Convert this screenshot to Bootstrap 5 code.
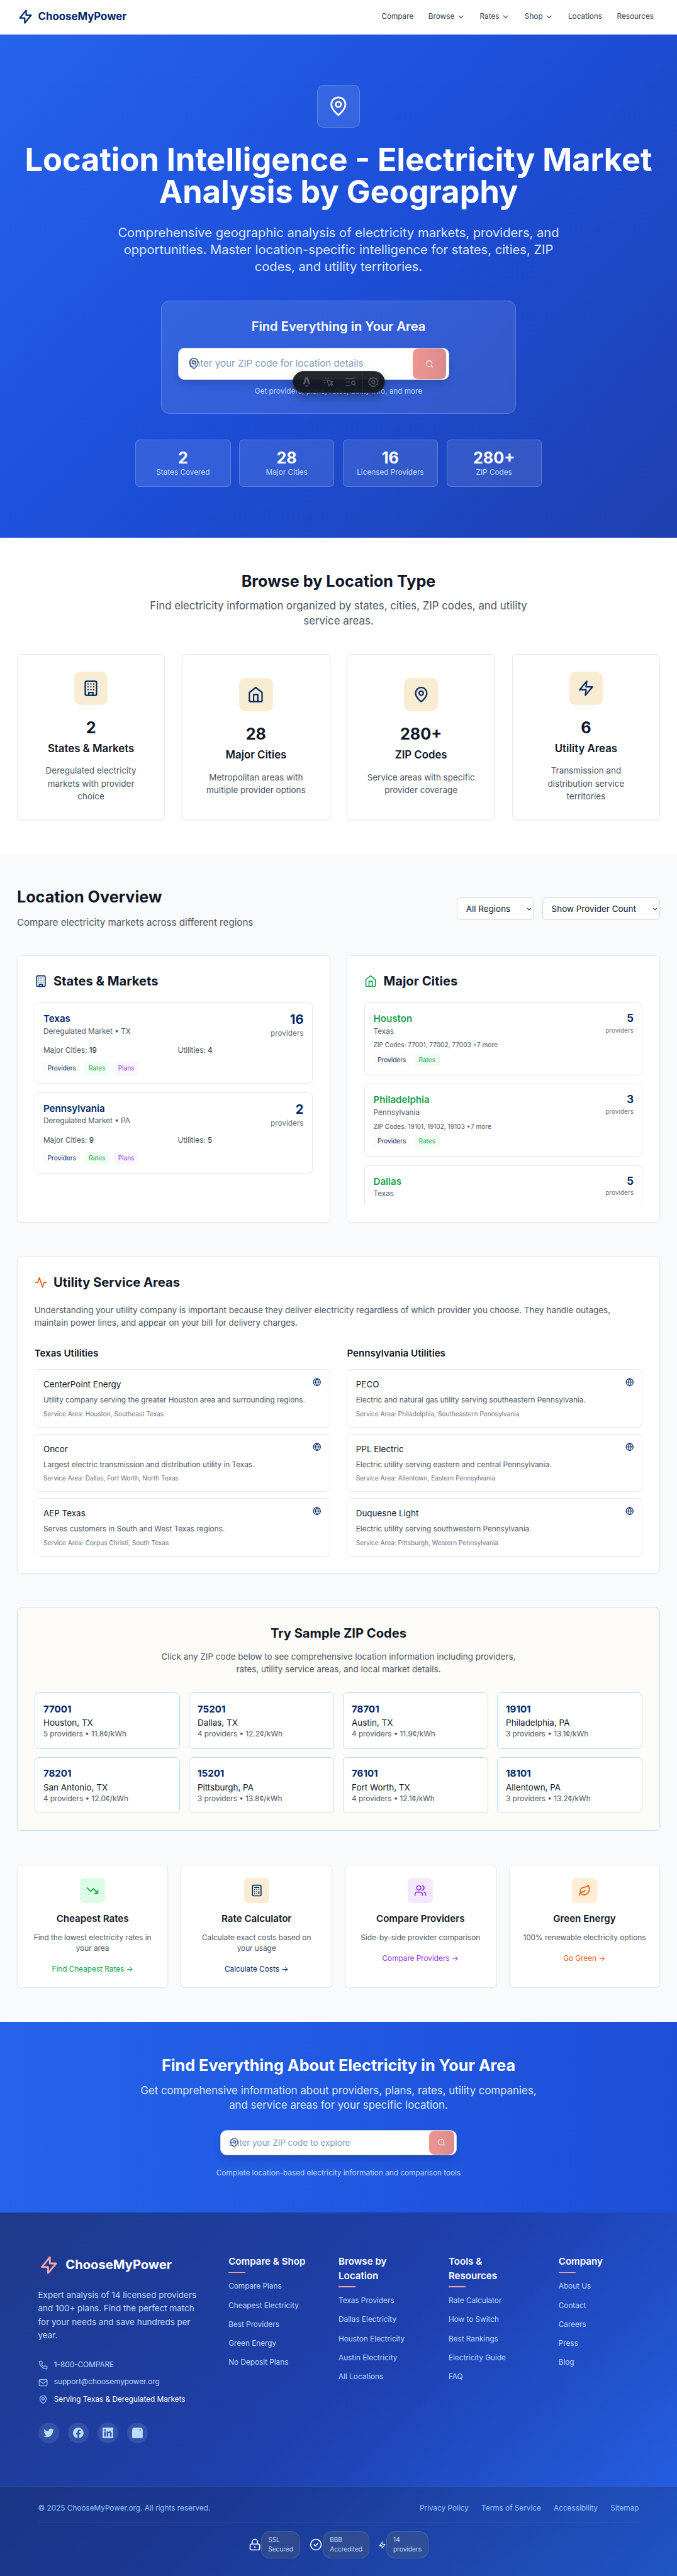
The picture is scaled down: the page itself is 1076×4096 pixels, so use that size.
<!DOCTYPE html>
<html lang="en">
<head>
<meta charset="utf-8">
<meta name="viewport" content="width=device-width, initial-scale=1">
<title>ChooseMyPower - Location Intelligence</title>
<link href="https://cdn.jsdelivr.net/npm/bootstrap@5.3.0/dist/css/bootstrap.min.css" rel="stylesheet">
<style>
html{font-size:13.452px}
body{font-family:Inter,"Liberation Sans",sans-serif;line-height:1.5;color:#111827;background:#fff;min-height:100vh;overflow-x:hidden}
a{text-decoration:none;color:inherit}
h1,h2,h3,h4,p,ul{margin:0;padding:0}
svg{display:block;flex:none}
.ic{fill:none;stroke:currentColor;stroke-width:2;stroke-linecap:round;stroke-linejoin:round}
.s16{width:1rem;height:1rem}.s18{width:1.125rem;height:1.125rem}.s20{width:1.25rem;height:1.25rem}
.s24{width:1.5rem;height:1.5rem}.s32{width:2rem;height:2rem}.s40{width:2.5rem;height:2.5rem}
.t12{font-size:.75rem;line-height:1rem}.t14{font-size:.875rem;line-height:1.25rem}.t16{font-size:1rem;line-height:1.5rem}
.t18{font-size:1.125rem;line-height:1.75rem}.t20{font-size:1.25rem;line-height:1.75rem}
.t24{font-size:1.5rem;line-height:2rem}.t30{font-size:1.875rem;line-height:2.25rem}
.sb{font-weight:600}
.navy{color:#002868}.green{color:#16a34a}.purple{color:#9333ea}.orange{color:#ea580c}.ink{color:#111827}
.g6{color:#4b5563}.g5{color:#6b7280}.sky1{color:#dbeafe}.sky2{color:#bfdbfe}.sky3{color:#93c5fd}
.wrap{padding:4rem 2rem}
.gap12{gap:.75rem}.mt12{margin-top:.75rem}.mb32{margin-bottom:2rem}
.topbar{height:4.0625rem;border-bottom:1px solid #e5e7eb;padding:0 2rem;background:#fff}
.topnav{gap:.25rem;color:#374151}
.topnav a{padding:0 .75rem;gap:.25rem}
.hero{background:linear-gradient(135deg,#2563eb 0%,#1d4ed8 50%,#1e40af 100%);padding:6rem 0;color:#fff}
.glass{background:rgba(255,255,255,.1);border:1px solid rgba(255,255,255,.2)}
.heroicon{width:5rem;height:5rem;border-radius:.75rem}
.hero h1{font-size:3.75rem;line-height:1;font-weight:700;margin:2rem 0}
.herolead{font-size:1.5rem;line-height:2rem}
.finder{width:42rem;border-radius:1rem;padding:calc(2.0625rem - 1px);margin:3rem 0;position:relative}
.zipbox{height:3.75rem;width:32rem;background:#fff;border:.125rem solid #cbd5e1;border-radius:.75rem;box-shadow:0 .6rem 1rem -.2rem rgba(0,0,0,.18);position:relative}
.zipbox .ph{color:#829ab8;font-size:1.125rem;padding-left:1.1875rem}
.zipbox .pin{position:absolute;left:1rem;top:50%;transform:translateY(-50%);color:#002868;opacity:.68}
.zipgo{width:4rem;background:linear-gradient(90deg,#f09492,#d98c8e);border-radius:.625rem;margin-right:.25rem;color:#fff}
.zipbox.small-zip{height:3rem;width:28rem}
.small-zip .ph{font-size:1rem;padding-left:1rem}
.small-zip .zipgo{width:3rem}
.devbar{position:absolute;left:15.5rem;top:8.25rem;width:10.9rem;height:2.6rem;border-radius:1.3rem;background:rgba(19,21,26,.93);border:1px solid #343841;box-shadow:0 .5rem 1rem rgba(0,0,0,.3);color:#55585f}
.devbar>span{width:2.68rem}
.devbar>span:last-child{border-left:1px solid #343841;width:2.75rem;height:100%}
.stats{width:48rem}
.stat{border-radius:.5rem;padding:calc(1.0625rem - 1px)}
.card-x{background:#fff;border:1px solid #e5e7eb;border-radius:.5rem;box-shadow:0 1px 2px rgba(0,0,0,.05)}
.p-x{padding:calc(2.0625rem - 1px) 1rem}
.panel{padding:calc(2.0625rem - 1px)}
.panel-gap{margin-top:4rem}
.typegrid{display:grid;grid-template-columns:repeat(4,1fr);gap:2rem}
.tile{width:4rem;height:4rem;border-radius:.75rem;background:#f8ecd2}
.tile48{width:3rem;height:3rem;border-radius:.5rem}
.soft{background:#f9fafb}
.two{display:grid;grid-template-columns:1fr 1fr;gap:2rem}
.util{margin-top:2rem}
.cols2{display:grid;grid-template-columns:1fr 1fr;gap:1rem}
.four{display:grid;grid-template-columns:repeat(4,1fr);gap:1rem}
.box{border:1px solid #e5e7eb;border-radius:.5rem;padding:calc(1.0625rem - 1px);background:#fff}
.pick{height:2.625rem;border:1px solid #d1d5db;border-radius:.5rem;padding:0 1rem;font-size:1rem;color:#111827;appearance:none;background:#fff url("data:image/svg+xml,%3Csvg xmlns='http://www.w3.org/2000/svg' viewBox='0 0 10 6' fill='none' stroke='%23222'%3E%3Cpath d='M1.5 1l3.5 3.7L8.500 1' stroke-width='1.3'/%3E%3C/svg%3E") no-repeat right .2rem center/.6rem .36rem}
.selA{width:9.1rem}.selB{width:13.9rem}
.tag{padding:.25rem .5rem;border-radius:.25rem;font-size:.75rem;line-height:1rem}
.tag-a{background:#fefcf8;color:#002868}.tag-b{background:#f0fdf4;color:#16a34a}.tag-c{background:#faf5ff;color:#9333ea}
.cities{height:24rem;overflow:hidden}
.sample{background:#fefcf8;border:1px solid #bfdbfe;border-radius:.5rem}
.sample .box{border-color:#bfdbfe}
.tools{display:grid;grid-template-columns:repeat(4,1fr);gap:1.5rem;margin-top:4rem}
.tools .card-x{padding:calc(1.5625rem - 1px) .5rem}
.bg-g{background:#dcfce7}.bg-y{background:#f8ecd2}.bg-p{background:#f3e8ff}.bg-o{background:#ffedd5}
.cta{background:linear-gradient(90deg,#2563eb,#1d4ed8);color:#fff;padding:4rem 0}
.foot{background:linear-gradient(135deg,#1e3a8a 0%,#1e40af 50%,#2563eb 100%);color:#fff}
.footmain{padding:5rem 4.5rem;display:grid;grid-template-columns:19rem repeat(4,9.5rem);gap:3.5rem}
.footmain h4{font-size:1.125rem;line-height:1.5;font-weight:600;position:relative;margin-bottom:1.25rem}
.footmain h4::after{content:"";position:absolute;left:0;bottom:-.5rem;width:2rem;height:.125rem;background:#fca5a5}
.footmain li{margin-bottom:.75rem;height:1.5rem;line-height:1.5rem}
.footmain li a{font-size:.875rem;line-height:1.25rem}
.lead-f{line-height:1.6;margin:1.5rem 0 2rem}
.contact{gap:.75rem}
.contact div{gap:.75rem;font-size:.875rem;line-height:1.3125rem}
.soc-row{margin-top:2rem}
.soc{width:2.5rem;height:2.5rem;border-radius:50%;background:rgba(255,255,255,.1)}
.footbar{background:rgba(15,23,42,.2);border-top:1px solid rgba(255,255,255,.1);padding:2rem 4.5rem}
.flinks{gap:1.5rem}
.seals{border-top:.125rem solid rgba(255,255,255,.08);padding-top:1rem;margin-top:1rem}
.seal{border:1px solid rgba(255,255,255,.12);border-radius:1rem;padding:.375rem .75rem;background:rgba(120,118,95,.22);font-size:.75rem;line-height:1.125rem}
.w24{width:1.5rem}.w27{width:1.6875rem}.w16{width:1rem}
</style>
<script src="https://cdn.jsdelivr.net/npm/bootstrap@5.3.0/dist/js/bootstrap.bundle.min.js"></script>
</head>
<body class="d-flex flex-column">
<svg width="0" height="0" class="position-absolute" aria-hidden="true">
<defs>
<symbol id="bolt" viewBox="0 0 24 24"><path d="M13 10V3L4 14h7v7l9-11h-7z"/></symbol>
<symbol id="zap" viewBox="0 0 24 24"><path d="M13 2 3 14h9l-1 8 10-12h-9z"/></symbol>
<symbol id="down" viewBox="0 0 24 24"><path d="m6 9 6 6 6-6"/></symbol>
<symbol id="pin" viewBox="0 0 24 24"><path d="M20 10c0 6-8 12-8 12s-8-6-8-12a8 8 0 0 1 16 0Z"/><circle cx="12" cy="10" r="3"/></symbol>
<symbol id="find" viewBox="0 0 24 24"><circle cx="11" cy="11" r="8"/><path d="m21 21-4.300-4.300"/></symbol>
<symbol id="bld" viewBox="0 0 24 24"><rect x="4" y="2" width="16" height="20" rx="2"/><path d="M9 22v-4h6v4M8 6h.01M16 6h.01M12 6h.01M12 10h.01M12 14h.01M16 10h.01M16 14h.01M8 10h.01M8 14h.01"/></symbol>
<symbol id="home" viewBox="0 0 24 24"><path d="m3 9 9-7 9 7v11a2 2 0 0 1-2 2H5a2 2 0 0 1-2-2z"/><path d="M9 22V12h6v10"/></symbol>
<symbol id="act" viewBox="0 0 24 24"><path d="M22 12h-4l-3 9L9 3l-3 9H2"/></symbol>
<symbol id="globe" viewBox="0 0 24 24"><circle cx="12" cy="12" r="10"/><path d="M12 2a14.500 14.500 0 0 0 0 20 14.500 14.500 0 0 0 0-20M2 12h20"/></symbol>
<symbol id="trend" viewBox="0 0 24 24"><path d="m22 17-8.500-8.500-5 5L2 7"/><path d="M16 17h6v-6"/></symbol>
<symbol id="calc" viewBox="0 0 24 24"><rect x="4" y="2" width="16" height="20" rx="2"/><path d="M8 6h8M16 14v4M16 10h.01M12 10h.01M8 10h.01M12 14h.01M8 14h.01M12 18h.01M8 18h.01"/></symbol>
<symbol id="users" viewBox="0 0 24 24"><path d="M16 21v-2a4 4 0 0 0-4-4H6a4 4 0 0 0-4 4v2"/><circle cx="9" cy="7" r="4"/><path d="M22 21v-2a4 4 0 0 0-3-3.870M16 3.130a4 4 0 0 1 0 7.750"/></symbol>
<symbol id="leaf" viewBox="0 0 24 24"><path d="M11 20A7 7 0 0 1 9.800 6.100C15.500 5 17 4.480 19 2c1 2 2 4.180 2 8 0 5.500-4.780 10-10 10Z"/><path d="M2 21c0-3 1.850-5.360 5.080-6C9.500 14.520 12 13 13 12"/></symbol>
<symbol id="phone" viewBox="0 0 24 24"><path d="M22 16.920v3a2 2 0 0 1-2.180 2 19.790 19.790 0 0 1-8.630-3.070 19.500 19.500 0 0 1-6-6 19.790 19.790 0 0 1-3.070-8.670A2 2 0 0 1 4.110 2h3a2 2 0 0 1 2 1.720c.13.960.36 1.900.7 2.810a2 2 0 0 1-.45 2.110L8.090 9.910a16 16 0 0 0 6 6l1.270-1.270a2 2 0 0 1 2.110-.45c.91.340 1.850.57 2.810.7A2 2 0 0 1 22 16.920z"/></symbol>
<symbol id="mail" viewBox="0 0 24 24"><rect x="2" y="4" width="20" height="16" rx="2"/><path d="m22 7-10 7L2 7"/></symbol>
<symbol id="lock" viewBox="0 0 24 24"><rect x="3" y="11" width="18" height="11" rx="2"/><path d="M7 11V7a5 5 0 0 1 10 0v4M12 15.500v2"/></symbol>
<symbol id="okc" viewBox="0 0 24 24"><circle cx="12" cy="12" r="10"/><path d="m8.500 12 2.500 2.300L15.500 10"/></symbol>
</defs>
</svg>

<header class="topbar d-flex align-items-center justify-content-between">
  <a href="#" class="d-flex align-items-center gap-2 navy"><svg class="ic s32"><use href="#bolt"/></svg><span class="fw-bold t20">ChooseMyPower</span></a>
  <nav class="topnav d-flex t14">
    <a href="#">Compare</a>
    <a href="#" class="d-flex align-items-center">Browse <svg class="ic s16"><use href="#down"/></svg></a>
    <a href="#" class="d-flex align-items-center">Rates <svg class="ic s16"><use href="#down"/></svg></a>
    <a href="#" class="d-flex align-items-center">Shop <svg class="ic s16"><use href="#down"/></svg></a>
    <a href="#">Locations</a>
    <a href="#">Resources</a>
  </nav>
</header>

<section class="hero d-flex flex-column align-items-center text-center">
  <div class="heroicon glass d-flex align-items-center justify-content-center"><svg class="ic s40"><use href="#pin"/></svg></div>
  <h1>Location Intelligence - Electricity Market<br>Analysis by Geography</h1>
  <p class="herolead sky1">Comprehensive geographic analysis of electricity markets, providers, and<br>opportunities. Master location-specific intelligence for states, cities, ZIP<br>codes, and utility territories.</p>
  <div class="finder glass">
    <h2 class="t24 sb mb-4">Find Everything in Your Area</h2>
    <div class="zipbox d-flex align-items-stretch justify-content-between">
      <span class="ph d-flex align-items-center">Enter your ZIP code for location details</span>
      <svg class="ic s24 pin"><use href="#pin"/></svg>
      <span class="zipgo d-flex align-items-center justify-content-center"><svg class="ic s16"><use href="#find"/></svg></span>
    </div>
    <p class="t14 sky2 mt12">Get providers, plans, rates, utility info, and more</p>
    <div class="devbar d-flex align-items-center">
      <span class="d-flex justify-content-center ms-1"><svg class="s20" viewBox="0 0 20 20"><path fill="#5b5d63" d="M7.500 1h5L17 15q-2-1-4-1.200L10.200 5h-.4L7 13.800q-2 .2-4 1.200z"/><path fill="#5a2452" d="M5.500 14.500q4.500 2.500 9 0 .3 2.500-4.500 5-4.500-2.500-4.500-5z"/></svg></span>
      <span class="d-flex justify-content-center"><svg class="ic s20" viewBox="0 0 24 24"><path d="M8 8l4.500 13 2.500-5 4 4 2-2-4-4 5-2.500zM6 5 5 3M11 4l1-2M3 9H1M4 13l-2 1"/></svg></span>
      <span class="d-flex justify-content-center"><svg class="ic s20" viewBox="0 0 24 24"><path d="M1 4h17M1 12h9M1 20h10"/><circle cx="18" cy="14" r="4"/><path d="m20.500 17.500 2.500 3"/><circle cx="22" cy="2" r="3" fill="#5c2732" stroke="#5c2732"/></svg></span>
      <span class="d-flex justify-content-center align-items-center"><svg class="ic s20" viewBox="0 0 24 24"><path d="M12 1.500 15 4l4-.500 1 4 3 2.500-1.500 3 .5 4-4 1.500L15 22l-3-1-3 1-3-3.500L2 17l.5-4L1 10l3-2.500 1-4L9 4z"/><circle cx="12" cy="12" r="3.500"/></svg></span>
    </div>
  </div>
  <div class="stats four">
    <div class="stat glass"><div class="t30 fw-bold">2</div><div class="t14 sky2">States Covered</div></div>
    <div class="stat glass"><div class="t30 fw-bold">28</div><div class="t14 sky2">Major Cities</div></div>
    <div class="stat glass"><div class="t30 fw-bold">16</div><div class="t14 sky2">Licensed Providers</div></div>
    <div class="stat glass"><div class="t30 fw-bold">280+</div><div class="t14 sky2">ZIP Codes</div></div>
  </div>
</section>

<section class="wrap text-center">
  <h2 class="t30 fw-bold mb-3">Browse by Location Type</h2>
  <p class="t20 g6 mb-5">Find electricity information organized by states, cities, ZIP codes, and utility<br>service areas.</p>
  <div class="typegrid">
    <div class="card-x p-x d-flex flex-column align-items-center justify-content-center">
      <div class="tile navy d-flex align-items-center justify-content-center mb-4"><svg class="ic s32"><use href="#bld"/></svg></div>
      <div class="t30 fw-bold mb-2">2</div><h3 class="t20 sb mb-3">States &amp; Markets</h3><p class="t16 g6">Deregulated electricity<br>markets with provider<br>choice</p>
    </div>
    <div class="card-x p-x d-flex flex-column align-items-center justify-content-center">
      <div class="tile navy d-flex align-items-center justify-content-center mb-4"><svg class="ic s32"><use href="#home"/></svg></div>
      <div class="t30 fw-bold mb-2">28</div><h3 class="t20 sb mb-3">Major Cities</h3><p class="t16 g6">Metropolitan areas with<br>multiple provider options</p>
    </div>
    <div class="card-x p-x d-flex flex-column align-items-center justify-content-center">
      <div class="tile navy d-flex align-items-center justify-content-center mb-4"><svg class="ic s32"><use href="#pin"/></svg></div>
      <div class="t30 fw-bold mb-2">280+</div><h3 class="t20 sb mb-3">ZIP Codes</h3><p class="t16 g6">Service areas with specific<br>provider coverage</p>
    </div>
    <div class="card-x p-x d-flex flex-column align-items-center justify-content-center">
      <div class="tile navy d-flex align-items-center justify-content-center mb-4"><svg class="ic s32"><use href="#zap"/></svg></div>
      <div class="t30 fw-bold mb-2">6</div><h3 class="t20 sb mb-3">Utility Areas</h3><p class="t16 g6">Transmission and<br>distribution service<br>territories</p>
    </div>
  </div>
</section>

<section class="wrap soft">
  <div class="d-flex justify-content-between align-items-center mb-5">
    <div><h2 class="t30 fw-bold mb-3">Location Overview</h2><p class="t18 g6">Compare electricity markets across different regions</p></div>
    <div class="d-flex gap-3">
      <select class="pick selA" aria-label="Region"><option>All Regions</option></select>
      <select class="pick selB" aria-label="Metric"><option>Show Provider Count</option></select>
    </div>
  </div>

  <div class="two">
    <div class="card-x panel">
      <h3 class="t24 fw-bold d-flex align-items-center gap12 mb-4"><svg class="ic s24 navy"><use href="#bld"/></svg>States &amp; Markets</h3>
      <div class="d-flex flex-column gap-3">
        <div class="box">
          <div class="d-flex justify-content-between"><div><h4 class="t18 sb navy">Texas</h4><p class="t14 g6">Deregulated Market • TX</p></div><div class="text-end"><div class="t24 fw-bold navy">16</div><div class="t14 g5">providers</div></div></div>
          <div class="cols2 t14 g6 mt12"><div>Major Cities: <span class="ink">19</span></div><div>Utilities: <span class="ink">4</span></div></div>
          <div class="d-flex gap-2 mt12"><a class="tag tag-a" href="#">Providers</a><a class="tag tag-b" href="#">Rates</a><a class="tag tag-c" href="#">Plans</a></div>
        </div>
        <div class="box">
          <div class="d-flex justify-content-between"><div><h4 class="t18 sb navy">Pennsylvania</h4><p class="t14 g6">Deregulated Market • PA</p></div><div class="text-end"><div class="t24 fw-bold navy">2</div><div class="t14 g5">providers</div></div></div>
          <div class="cols2 t14 g6 mt12"><div>Major Cities: <span class="ink">9</span></div><div>Utilities: <span class="ink">5</span></div></div>
          <div class="d-flex gap-2 mt12"><a class="tag tag-a" href="#">Providers</a><a class="tag tag-b" href="#">Rates</a><a class="tag tag-c" href="#">Plans</a></div>
        </div>
      </div>
    </div>
    <div class="card-x panel">
      <h3 class="t24 fw-bold d-flex align-items-center gap12 mb-4"><svg class="ic s24 green"><use href="#home"/></svg>Major Cities</h3>
      <div class="cities">
        <div class="box mb-3">
          <div class="d-flex justify-content-between"><div><h4 class="t18 sb green">Houston</h4><p class="t14 g6">Texas</p></div><div class="text-end"><div class="t20 fw-bold navy">5</div><div class="t12 g5">providers</div></div></div>
          <div class="t12 g6 mt-2">ZIP Codes: 77001, 77002, 77003 +7 more</div>
          <div class="d-flex gap-2 mt-2"><a class="tag tag-a" href="#">Providers</a><a class="tag tag-b" href="#">Rates</a></div>
        </div>
        <div class="box mb-3">
          <div class="d-flex justify-content-between"><div><h4 class="t18 sb green">Philadelphia</h4><p class="t14 g6">Pennsylvania</p></div><div class="text-end"><div class="t20 fw-bold navy">3</div><div class="t12 g5">providers</div></div></div>
          <div class="t12 g6 mt-2">ZIP Codes: 19101, 19102, 19103 +7 more</div>
          <div class="d-flex gap-2 mt-2"><a class="tag tag-a" href="#">Providers</a><a class="tag tag-b" href="#">Rates</a></div>
        </div>
        <div class="box">
          <div class="d-flex justify-content-between"><div><h4 class="t18 sb green">Dallas</h4><p class="t14 g6">Texas</p></div><div class="text-end"><div class="t20 fw-bold navy">5</div><div class="t12 g5">providers</div></div></div>
          <div class="mt-5"></div>
        </div>
      </div>
    </div>
  </div>

  <div class="card-x panel panel-gap">
    <h3 class="t24 fw-bold d-flex align-items-center gap12 mb-4"><svg class="ic s24 orange"><use href="#act"/></svg>Utility Service Areas</h3>
    <p class="t16 g6">Understanding your utility company is important because they deliver electricity regardless of which provider you choose. They handle outages,<br>maintain power lines, and appear on your bill for delivery charges.</p>
    <div class="two util">
      <div>
        <h4 class="t18 sb mb-3">Texas Utilities</h4>
        <div class="d-flex flex-column gap12">
          <div class="box"><div class="d-flex justify-content-between"><span class="t16">CenterPoint Energy</span><svg class="ic s16 navy"><use href="#globe"/></svg></div><p class="t14 g6 mt-2">Utility company serving the greater Houston area and surrounding regions.</p><p class="t12 g5 mt-2">Service Area: Houston, Southeast Texas</p></div>
          <div class="box"><div class="d-flex justify-content-between"><span class="t16">Oncor</span><svg class="ic s16 navy"><use href="#globe"/></svg></div><p class="t14 g6 mt-2">Largest electric transmission and distribution utility in Texas.</p><p class="t12 g5 mt-2">Service Area: Dallas, Fort Worth, North Texas</p></div>
          <div class="box"><div class="d-flex justify-content-between"><span class="t16">AEP Texas</span><svg class="ic s16 navy"><use href="#globe"/></svg></div><p class="t14 g6 mt-2">Serves customers in South and West Texas regions.</p><p class="t12 g5 mt-2">Service Area: Corpus Christi, South Texas</p></div>
        </div>
      </div>
      <div>
        <h4 class="t18 sb mb-3">Pennsylvania Utilities</h4>
        <div class="d-flex flex-column gap12">
          <div class="box"><div class="d-flex justify-content-between"><span class="t16">PECO</span><svg class="ic s16 navy"><use href="#globe"/></svg></div><p class="t14 g6 mt-2">Electric and natural gas utility serving southeastern Pennsylvania.</p><p class="t12 g5 mt-2">Service Area: Philadelphia, Southeastern Pennsylvania</p></div>
          <div class="box"><div class="d-flex justify-content-between"><span class="t16">PPL Electric</span><svg class="ic s16 navy"><use href="#globe"/></svg></div><p class="t14 g6 mt-2">Electric utility serving eastern and central Pennsylvania.</p><p class="t12 g5 mt-2">Service Area: Allentown, Eastern Pennsylvania</p></div>
          <div class="box"><div class="d-flex justify-content-between"><span class="t16">Duquesne Light</span><svg class="ic s16 navy"><use href="#globe"/></svg></div><p class="t14 g6 mt-2">Electric utility serving southwestern Pennsylvania.</p><p class="t12 g5 mt-2">Service Area: Pittsburgh, Western Pennsylvania</p></div>
        </div>
      </div>
    </div>
  </div>

  <div class="sample panel panel-gap">
    <div class="text-center mb32"><h3 class="t24 fw-bold mb-3">Try Sample ZIP Codes</h3><p class="t16 g6">Click any ZIP code below to see comprehensive location information including providers,<br>rates, utility service areas, and local market details.</p></div>
    <div class="four">
      <div class="box"><div class="t18 fw-bold navy">77001</div><div class="t16">Houston, TX</div><div class="t14 g6">5 providers • 11.8¢/kWh</div></div>
      <div class="box"><div class="t18 fw-bold navy">75201</div><div class="t16">Dallas, TX</div><div class="t14 g6">4 providers • 12.2¢/kWh</div></div>
      <div class="box"><div class="t18 fw-bold navy">78701</div><div class="t16">Austin, TX</div><div class="t14 g6">4 providers • 11.9¢/kWh</div></div>
      <div class="box"><div class="t18 fw-bold navy">19101</div><div class="t16">Philadelphia, PA</div><div class="t14 g6">3 providers • 13.1¢/kWh</div></div>
      <div class="box"><div class="t18 fw-bold navy">78201</div><div class="t16">San Antonio, TX</div><div class="t14 g6">4 providers • 12.0¢/kWh</div></div>
      <div class="box"><div class="t18 fw-bold navy">15201</div><div class="t16">Pittsburgh, PA</div><div class="t14 g6">3 providers • 13.8¢/kWh</div></div>
      <div class="box"><div class="t18 fw-bold navy">76101</div><div class="t16">Fort Worth, TX</div><div class="t14 g6">4 providers • 12.1¢/kWh</div></div>
      <div class="box"><div class="t18 fw-bold navy">18101</div><div class="t16">Allentown, PA</div><div class="t14 g6">3 providers • 13.2¢/kWh</div></div>
    </div>
  </div>

  <div class="tools text-center">
    <div class="card-x d-flex flex-column align-items-center"><div class="tile48 green d-flex align-items-center justify-content-center mb-3 bg-g"><svg class="ic s24"><use href="#trend"/></svg></div><h3 class="t18 sb">Cheapest Rates</h3><p class="t14 g6 mt12 mb-3">Find the lowest electricity rates in<br>your area</p><div><a class="t14 green" href="#">Find Cheapest Rates →</a></div></div>
    <div class="card-x d-flex flex-column align-items-center"><div class="tile48 navy d-flex align-items-center justify-content-center mb-3 bg-y"><svg class="ic s24"><use href="#calc"/></svg></div><h3 class="t18 sb">Rate Calculator</h3><p class="t14 g6 mt12 mb-3">Calculate exact costs based on<br>your usage</p><div><a class="t14 navy" href="#">Calculate Costs →</a></div></div>
    <div class="card-x d-flex flex-column align-items-center"><div class="tile48 purple d-flex align-items-center justify-content-center mb-3 bg-p"><svg class="ic s24"><use href="#users"/></svg></div><h3 class="t18 sb">Compare Providers</h3><p class="t14 g6 mt12 mb-3">Side-by-side provider comparison</p><div><a class="t14 purple" href="#">Compare Providers →</a></div></div>
    <div class="card-x d-flex flex-column align-items-center"><div class="tile48 orange d-flex align-items-center justify-content-center mb-3 bg-o"><svg class="ic s24"><use href="#leaf"/></svg></div><h3 class="t18 sb">Green Energy</h3><p class="t14 g6 mt12 mb-3">100% renewable electricity options</p><div><a class="t14 orange" href="#">Go Green →</a></div></div>
  </div>
</section>

<section class="cta d-flex flex-column align-items-center text-center">
  <h2 class="t30 fw-bold mb-3">Find Everything About Electricity in Your Area</h2>
  <p class="t20 sky1 mb32">Get comprehensive information about providers, plans, rates, utility companies,<br>and service areas for your specific location.</p>
  <div class="zipbox small-zip d-flex align-items-stretch justify-content-between mb-4">
    <span class="ph d-flex align-items-center">Enter your ZIP code to explore</span>
    <svg class="ic s20 pin"><use href="#pin"/></svg>
    <span class="zipgo d-flex align-items-center justify-content-center"><svg class="ic s16"><use href="#find"/></svg></span>
  </div>
  <p class="t14 sky2">Complete location-based electricity information and comparison tools</p>
</section>

<footer class="foot flex-grow-1 d-flex flex-column">
  <div class="footmain">
    <div>
      <div class="d-flex align-items-center gap12"><svg class="ic s40" color="#fca5a5"><use href="#bolt"/></svg><span class="t24 fw-bold">ChooseMyPower</span></div>
      <p class="lead-f sky2">Expert analysis of 14 licensed providers<br>and 100+ plans. Find the perfect match<br>for your needs and save hundreds per<br>year.</p>
      <div class="contact d-flex flex-column">
        <div class="d-flex align-items-center sky2"><svg class="ic s18 sky3"><use href="#phone"/></svg>1-800-COMPARE</div>
        <div class="d-flex align-items-center sky2"><svg class="ic s18 sky3"><use href="#mail"/></svg>support@choosemypower.org</div>
        <div class="d-flex align-items-center"><svg class="ic s18 sky3"><use href="#pin"/></svg>Serving Texas &amp; Deregulated Markets</div>
      </div>
      <div class="d-flex gap-3 soc-row sky2">
        <a class="soc d-flex align-items-center justify-content-center" href="#" aria-label="Twitter"><svg class="s20" viewBox="0 0 24 24" fill="currentColor"><path d="M23.950 4.570a10 10 0 0 1-2.820.77 4.960 4.960 0 0 0 2.160-2.720c-.95.550-2 .95-3.130 1.180a4.920 4.920 0 0 0-8.380 4.480C7.690 8.090 4.070 6.130 1.640 3.160a4.820 4.820 0 0 0-.67 2.480c0 1.710.87 3.210 2.190 4.100a4.900 4.900 0 0 1-2.230-.62v.06a4.920 4.920 0 0 0 3.950 4.830 5 5 0 0 1-2.210.08 4.940 4.940 0 0 0 4.600 3.420A9.870 9.870 0 0 1 0 19.540a14 14 0 0 0 7.550 2.210c9.050 0 14-7.500 14-13.980 0-.21 0-.42-.02-.63a9.940 9.940 0 0 0 2.460-2.550z"/></svg></a>
        <a class="soc d-flex align-items-center justify-content-center" href="#" aria-label="Facebook"><svg class="s20" viewBox="0 0 24 24" fill="currentColor"><path d="M24 12.070C24 5.450 18.630.07 12 .07S0 5.450 0 12.070c0 5.990 4.390 10.960 10.130 11.860v-8.390H7.080v-3.470h3.050V9.430c0-3.010 1.790-4.670 4.530-4.670 1.310 0 2.690.24 2.690.24v2.950h-1.510c-1.490 0-1.960.93-1.960 1.870v2.250h3.330l-.53 3.470h-2.800v8.390C19.610 23.030 24 18.060 24 12.070z"/></svg></a>
        <a class="soc d-flex align-items-center justify-content-center" href="#" aria-label="LinkedIn"><svg class="s20" viewBox="0 0 24 24" fill="currentColor"><path fill-rule="evenodd" d="M1.500 0h21Q24 0 24 1.500v21q0 1.500-1.500 1.500h-21Q0 24 0 22.500v-21Q0 0 1.500 0zM3.600 9v11.450h3.500V9zM5.340 3.300a2.060 2.060 0 1 0 0 4.130 2.060 2.060 0 0 0 0-4.130zM9.350 9v11.450h3.560v-5.600c0-1.500.28-2.900 2.100-2.900 1.850 0 1.870 1.700 1.870 3v5.500h3.570v-6.300c0-3.100-.67-5.430-4.270-5.430-1.700 0-2.900.95-3.370 1.850h-.05V9z"/></svg></a>
        <a class="soc d-flex align-items-center justify-content-center" href="#" aria-label="Instagram"><svg class="s20" viewBox="0 0 24 24" fill="currentColor"><path fill-rule="evenodd" d="M6 0h12q6 0 6 6v16q0 2-2 2H2q-2 0-2-2V6q0-6 6-6zM18 4a1.500 1.500 0 1 0 0 3 1.500 1.500 0 0 0 0-3z"/></svg></a>
      </div>
    </div>
    <div><h4>Compare &amp; Shop</h4><ul class="list-unstyled sky2"><li><a href="#">Compare Plans</a></li><li><a href="#">Cheapest Electricity</a></li><li><a href="#">Best Providers</a></li><li><a href="#">Green Energy</a></li><li><a href="#">No Deposit Plans</a></li></ul></div>
    <div><h4>Browse by<br>Location</h4><ul class="list-unstyled sky2"><li><a href="#">Texas Providers</a></li><li><a href="#">Dallas Electricity</a></li><li><a href="#">Houston Electricity</a></li><li><a href="#">Austin Electricity</a></li><li><a href="#">All Locations</a></li></ul></div>
    <div><h4>Tools &amp;<br>Resources</h4><ul class="list-unstyled sky2"><li><a href="#">Rate Calculator</a></li><li><a href="#">How to Switch</a></li><li><a href="#">Best Rankings</a></li><li><a href="#">Electricity Guide</a></li><li><a href="#">FAQ</a></li></ul></div>
    <div><h4>Company</h4><ul class="list-unstyled sky2"><li><a href="#">About Us</a></li><li><a href="#">Contact</a></li><li><a href="#">Careers</a></li><li><a href="#">Press</a></li><li><a href="#">Blog</a></li></ul></div>
  </div>
  <div class="footbar flex-grow-1">
    <div class="d-flex justify-content-between sky3 t14"><span>© 2025 ChooseMyPower.org. All rights reserved.</span><div class="d-flex flinks"><a href="#">Privacy Policy</a><a href="#">Terms of Service</a><a href="#">Accessibility</a><a href="#">Sitemap</a></div></div>
    <div class="seals d-flex justify-content-center gap-3">
      <div class="d-flex align-items-center"><span class="w24 d-flex justify-content-center"><svg class="ic s24"><use href="#lock"/></svg></span><span class="seal sky2">SSL<br>Secured</span></div>
      <div class="d-flex align-items-center"><span class="w27 d-flex justify-content-center"><svg class="ic s24"><use href="#okc"/></svg></span><span class="seal sky2">BBB<br>Accredited</span></div>
      <div class="d-flex align-items-center"><span class="w16 d-flex justify-content-center"><svg class="ic s16"><use href="#bolt"/></svg></span><span class="seal sky2">14<br>providers</span></div>
    </div>
  </div>
</footer>
</body>
</html>
